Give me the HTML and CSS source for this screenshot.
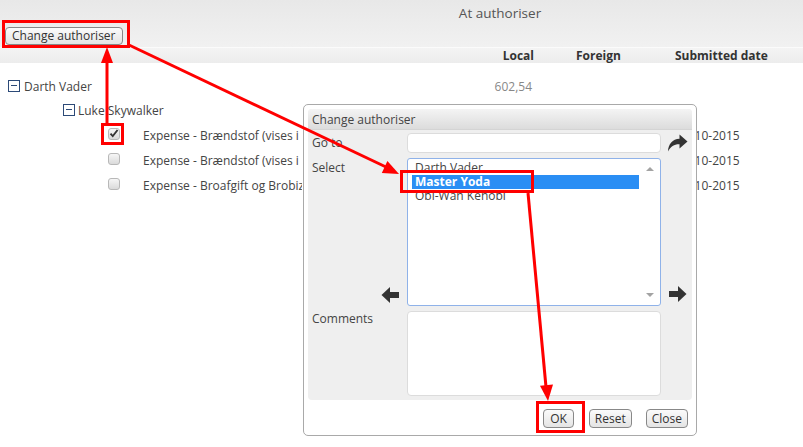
FILE: index.html
```html
<!DOCTYPE html>
<html lang="en">
<head>
    <meta charset="UTF-8">
    <meta name="viewport" content="width=device-width, initial-scale=1.0">
    <title>At authoriser</title>
    <link rel="stylesheet" href="styles.css">
</head>
<body>

    <div class="page">
        <div class="topbar">
            <div class="title">At authoriser</div>
            <button class="btn btn-change" type="button">Change authoriser</button>
        </div>

        <div class="grid cols">
            <div></div>
            <div class="c-local">Local</div>
            <div class="c-foreign">Foreign</div>
            <div class="c-date">Submitted date</div>
        </div>

        <div class="tree">
            <div class="grid row">
                <div class="name lvl1"><span class="toggle"></span>Darth Vader</div>
                <div class="c-local amount">602,54</div>
                <div></div>
                <div></div>
            </div>
            <div class="grid row">
                <div class="name lvl2"><span class="toggle"></span>Luke Skywalker</div>
                <div></div>
                <div></div>
                <div></div>
            </div>
            <div class="grid row">
                <div class="name lvl3"><span class="check checked"><svg width="10" height="10" viewBox="0 0 10 10"><path d="M0.8 5.2 L3.8 8.4 L9.3 1.6 L7.8 0.6 L3.7 5.8 L2.2 4 Z" fill="#333"/></svg></span><span class="label-text">Expense - Brændstof (vises i kørsel)</span></div>
                <div></div>
                <div></div>
                <div class="c-date">01-10-2015</div>
            </div>
            <div class="grid row">
                <div class="name lvl3"><span class="check"></span><span class="label-text">Expense - Brændstof (vises i kørsel)</span></div>
                <div></div>
                <div></div>
                <div class="c-date">01-10-2015</div>
            </div>
            <div class="grid row">
                <div class="name lvl3"><span class="check"></span><span class="label-text">Expense - Broafgift og Brobizz</span></div>
                <div></div>
                <div></div>
                <div class="c-date">01-10-2015</div>
            </div>
        </div>

        <div class="dialog">
            <div class="panel">
                <div class="dialog-title">Change authoriser</div>
                <div class="form">
                    <div class="label label-mid">Go to</div>
                    <div class="field"><div class="input goto"></div></div>
                    <div class="icon icon-go">
                        <svg width="21" height="18" viewBox="0 0 21 18"><path d="M12.5 0.5 L20.5 7.5 L12.5 14.5 L12.5 10.3 C7.5 10.1 3.8 12.2 1 17.5 C1.3 10 5.5 5 12.5 4.7 Z" fill="#333"/></svg>
                    </div>

                    <div class="label label-select">
                        <span>Select</span>
                        <svg width="18" height="16" viewBox="0 0 18 16"><path d="M18 5 H9 V0 L0.5 8 L9 16 V11 H18 Z" fill="#333"/></svg>
                    </div>
                    <div class="field">
                        <div class="listbox">
                            <div class="items">
                                <div class="item">Darth Vader</div>
                                <div class="item selected">Master Yoda</div>
                                <div class="item">Obi-Wan Kenobi</div>
                            </div>
                            <div class="scroll">
                                <span class="tri up"></span>
                                <span class="tri down"></span>
                            </div>
                        </div>
                    </div>
                    <div class="icon icon-next">
                        <svg width="18" height="16" viewBox="0 0 18 16"><path d="M0 5 H9 V0 L17.5 8 L9 16 V11 H0 Z" fill="#333"/></svg>
                    </div>

                    <div class="label">Comments</div>
                    <div class="field"><div class="input comments"></div></div>
                    <div></div>
                </div>
            </div>
            <div class="footer">
                <button class="btn btn-ok" type="button">OK</button>
                <button class="btn" type="button">Reset</button>
                <button class="btn" type="button">Close</button>
            </div>
        </div>

        <!-- annotations -->
        <svg class="marks" width="803" height="447" viewBox="0 0 803 447">
            <g fill="none" stroke="#f00" stroke-width="3">
                <rect x="3.5" y="21.5" width="125" height="25"/>
                <rect x="102.5" y="124.5" width="20" height="19"/>
                <rect x="401.5" y="171.5" width="131" height="20"/>
                <rect x="537.5" y="402.5" width="46" height="29"/>
                <line x1="107" y1="123" x2="107" y2="60"/>
                <line x1="129" y1="45" x2="386" y2="167"/>
                <line x1="528" y1="193" x2="546" y2="387"/>
            </g>
            <g fill="#f00">
                <polygon points="107,47 101,63 113,63"/>
                <polygon points="399,174 381.8,172.9 387.4,161.1"/>
                <polygon points="548,401 540,385.7 553,384.5"/>
            </g>
        </svg>
    </div>

</body>
</html>
```

FILE: styles.css
```css
* {
    margin: 0;
    padding: 0;
    box-sizing: border-box;
    font-family: 'Open Sans', 'DejaVu Sans', sans-serif;
}

body {
    background-color: #fff;
    color: #444;
    font-size: 12px;
}

.page {
    position: relative;
    width: 803px;
    height: 447px;
    overflow: hidden;
}

.topbar {
    height: 47px;
    background: linear-gradient(#e8e8e8, #f1f1f1);
    padding-left: 5px;
}

.title {
    padding: 4px 0 0 192px;
    height: 27px;
    line-height: 18px;
    font-size: 13.5px;
    text-align: center;
    color: #555;
}

.btn {
    height: 19px;
    padding: 0 5px;
    border: 1px solid #888;
    border-radius: 4px;
    background: linear-gradient(#fbfbfb, #e4e4e4);
    color: #333;
    font-size: 12px;
    line-height: 16px;
    cursor: pointer;
}

.btn-change {
    height: 18px;
    padding: 0 6px;
}

.grid {
    display: grid;
    grid-template-columns: 460px 74px 141px 1fr;
}

.cols {
    height: 16px;
    line-height: 15px;
    border-top: 1px solid #fbfbfb;
    background: linear-gradient(#f4f4f4, #ececec);
    font-weight: bold;
    color: #333;
}

.c-local {
    text-align: right;
}

.c-foreign {
    padding-left: 42px;
}

.tree {
    padding-top: 12px;
}

.row {
    height: 24px;
    line-height: 24px;
    color: #444;
}

.row:nth-child(n+3) {
    height: 25px;
    line-height: 25px;
}

.row .c-date {
    padding-left: 2px;
}

.amount {
    color: #888;
    padding-right: 2px;
}

.name {
    display: flex;
    align-items: center;
    white-space: nowrap;
}

.lvl1 {
    padding-left: 8px;
}

.lvl2 {
    padding-left: 63px;
}

.lvl3 {
    padding-left: 108px;
    width: 302px;
    overflow: hidden;
}

.toggle {
    position: relative;
    width: 12px;
    height: 12px;
    margin-right: 4px;
    margin-top: -2px;
    border: 1px solid #2c4a78;
    background: #fff;
}

.lvl2 .toggle {
    margin-right: 3px;
}

.toggle::after {
    content: "";
    position: absolute;
    left: 2px;
    top: 4px;
    width: 6px;
    height: 1px;
    background: #2c4a78;
}

.check {
    display: flex;
    flex-shrink: 0;
    align-items: center;
    justify-content: center;
    width: 12px;
    height: 12px;
    margin-right: 23px;
    margin-top: -4px;
    border: 1px solid #b8b8b8;
    border-radius: 3px;
    background: linear-gradient(#f6f6f6, #dadada);
}

.dialog {
    position: absolute;
    left: 303px;
    top: 104px;
    width: 394px;
    height: 332px;
    padding: 4px;
    border: 1px solid #a9a9a9;
    border-radius: 5px;
    background: #fff;
    z-index: 10;
}

.panel {
    height: 291px;
    background: #efefef;
    border-radius: 4px;
    padding-bottom: 3px;
}

.dialog-title {
    height: 21px;
    line-height: 21px;
    padding-left: 4px;
    border-radius: 4px 4px 0 0;
    border-bottom: 1px solid #d4d4d4;
    background: linear-gradient(#f4f4f4, #dcdcdc);
    color: #444;
}

.form {
    display: grid;
    grid-template-columns: 99px 254px 31px;
    grid-template-rows: 20px 148px 85px;
    row-gap: 5px;
    padding-top: 3px;
}

.label {
    padding-left: 4px;
    line-height: 16px;
    color: #444;
}

.label-mid {
    display: flex;
    align-items: center;
}

.label-select {
    display: flex;
    flex-direction: column;
    justify-content: space-between;
    align-items: flex-start;
    padding-top: 2px;
    padding-bottom: 3px;
}

.label-select svg {
    align-self: flex-end;
    margin-right: 8px;
}

.input {
    height: 100%;
    background: #fff;
    border: 1px solid #dcdcdc;
    border-radius: 4px;
}

.icon {
    display: flex;
    padding-left: 6px;
}

.icon-go {
    align-items: center;
}

.icon-next {
    align-items: flex-end;
    padding-left: 8px;
    padding-bottom: 4px;
}

.listbox {
    display: flex;
    height: 100%;
    background: #fff;
    border: 1px solid #8fb2e9;
    border-radius: 3px;
}

.items {
    flex: 1;
    padding: 2px 0 0 4px;
}

.item {
    height: 14px;
    line-height: 14px;
    padding-left: 3px;
    color: #444;
}

.item.selected {
    background: #2a8ef4;
    color: #fff;
    font-weight: bold;
}

.scroll {
    width: 21px;
    display: flex;
    flex-direction: column;
    justify-content: space-between;
    align-items: center;
    padding: 8px 0 8px;
}

.tri {
    width: 0;
    height: 0;
    border-left: 4px solid transparent;
    border-right: 4px solid transparent;
}

.tri.up {
    border-bottom: 4px solid #a3a3a3;
}

.tri.down {
    border-top: 4px solid #a3a3a3;
}

.footer {
    display: flex;
    justify-content: flex-end;
    gap: 14px;
    padding: 9px 4px 0 0;
}

.btn-ok {
    margin-right: 1px;
    padding: 0 6px;
}

.marks {
    position: absolute;
    left: 0;
    top: 0;
    z-index: 20;
    pointer-events: none;
}
```
